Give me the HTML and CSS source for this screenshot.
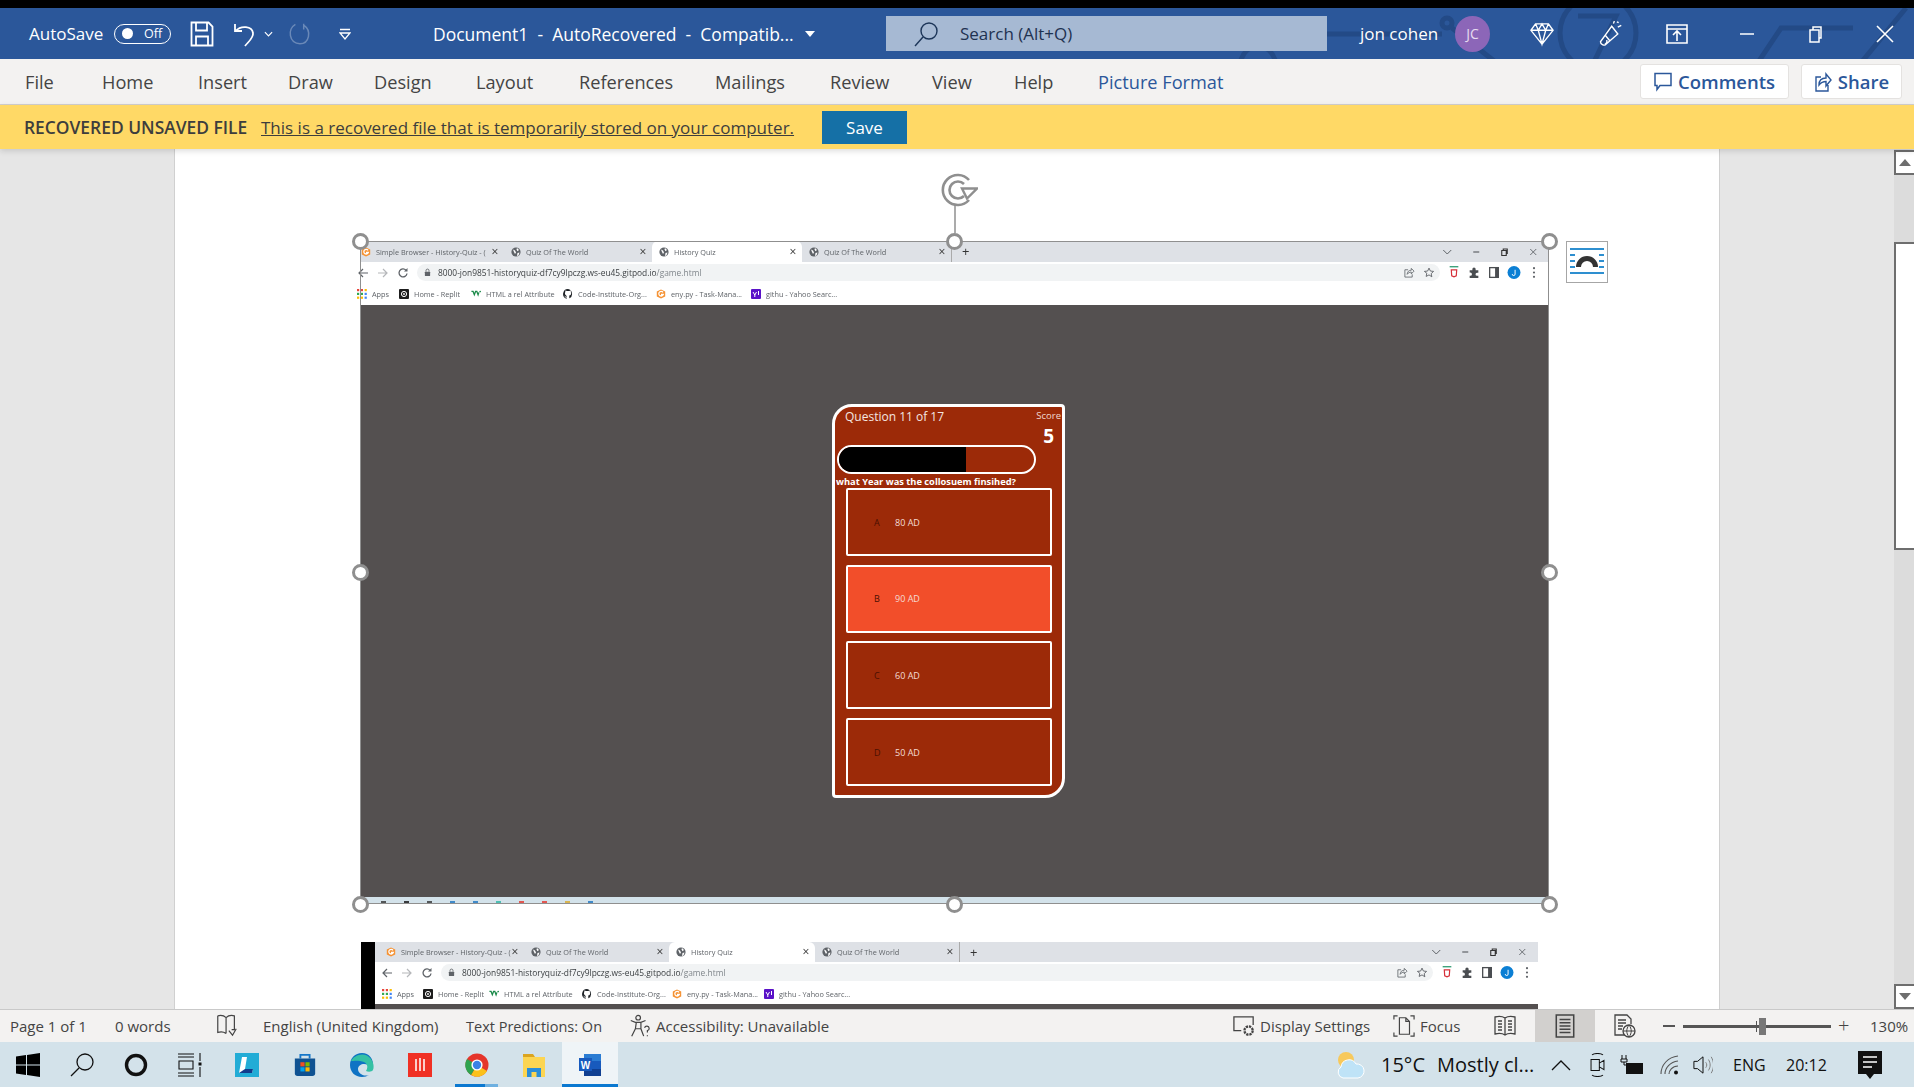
FILE: index.html
```html
<!DOCTYPE html>
<html lang="en">
<head>
<meta charset="utf-8">
<title>Document1 - Word</title>
<link rel="stylesheet" href="styles.css">
</head>
<body>
<svg class="sprite" aria-hidden="true">
  <symbol id="globe" viewBox="0 0 10 10"><circle cx="5" cy="5" r="4.6" fill="#5f6368"/><path d="M2 2.5l2 1 1 2-1 1.5-1-2zM6 1l2 2-1.5 1.2L5.500 2.500zM6.500 6l2-.5-1 3-1.500.5z" fill="#fff"/></symbol>
  <symbol id="gicon" viewBox="0 0 10 10"><path d="M5 .4l4.200 2.200v4.800L5 9.600.8 7.400V2.600z" fill="#f59233"/><path d="M7 3.300A2.300 2.300 0 1 0 7.300 5.500H5" fill="none" stroke="#fff" stroke-width="1.300"/></symbol>
  <symbol id="back" viewBox="0 0 12 12"><path d="M11 6H2M6 2L2 6l4 4" fill="none" stroke="currentColor" stroke-width="1.200"/></symbol>
  <symbol id="fwd" viewBox="0 0 12 12"><path d="M1 6h9M6 2l4 4-4 4" fill="none" stroke="currentColor" stroke-width="1.200"/></symbol>
  <symbol id="reload" viewBox="0 0 12 12"><path d="M10 6.500A4 4 0 1 1 9 3.200" fill="none" stroke="#5f6368" stroke-width="1.300"/><path d="M10.500 1v3.500H7z" fill="#5f6368"/></symbol>
  <symbol id="lock" viewBox="0 0 8 10"><rect x="1" y="4" width="6" height="5" rx=".6" fill="#5f6368"/><path d="M2.300 4V2.800a1.700 1.700 0 0 1 3.400 0V4" fill="none" stroke="#5f6368"/></symbol>
  <symbol id="share" viewBox="0 0 12 12"><path d="M5 3H1.500v8h8V8M4 8c0-3 2-4.500 4.500-4.500V1.500l3 3-3 3V5.500C6.500 5.500 5 6.500 4 8z" fill="none" stroke="#5f6368" stroke-width=".9"/></symbol>
  <symbol id="star" viewBox="0 0 12 12"><path d="M6 1.200l1.500 3.200 3.500.4-2.600 2.400.7 3.500L6 8.600l-3.100 1.700.7-3.500L1 4.800l3.500-.4z" fill="none" stroke="#5f6368" stroke-width="1"/></symbol>
  <symbol id="ext" viewBox="0 0 10 12"><rect x="1" y="0" width="8" height="1.300" fill="#3fa27c"/><path d="M2.500 3.500h5l-.4 5.500-2.100 1-2.100-1z" fill="none" stroke="#d6303a" stroke-width="1.100"/></symbol>
  <symbol id="puzzle" viewBox="0 0 12 12"><path d="M2 4h2.500V2.800a1.500 1.500 0 0 1 3 0V4H10v2.300H8.800a1.400 1.400 0 0 0 0 2.800H10V11H2V9h.6a1.500 1.500 0 0 0 0-3H2z" fill="#4a4d51"/></symbol>
  <symbol id="panel" viewBox="0 0 10 12"><rect x="1" y="1.500" width="8" height="9" fill="#fff" stroke="#4a4d51" stroke-width="1.200"/><rect x="6" y="1.500" width="3" height="9" fill="#4a4d51"/></symbol>
  <symbol id="avatarj" viewBox="0 0 12 12"><circle cx="6" cy="6" r="6" fill="#0b7fd4"/><path d="M7 3.500v4a1.300 1.300 0 0 1-2.600 0" fill="none" stroke="#fff" stroke-width=".9"/></symbol>
  <symbol id="kebab" viewBox="0 0 4 12"><circle cx="2" cy="2" r="1" fill="#5f6368"/><circle cx="2" cy="6" r="1" fill="#5f6368"/><circle cx="2" cy="10" r="1" fill="#5f6368"/></symbol>
  <symbol id="appgrid" viewBox="0 0 10 10"><g fill="#e8453c"><rect width="2.200" height="2.200"/><rect x="3.800" width="2.200" height="2.200"/></g><rect x="7.600" width="2.200" height="2.200" fill="#fbbc05"/><g fill="#34a853"><rect y="3.800" width="2.200" height="2.200"/><rect x="3.800" y="3.800" width="2.200" height="2.200"/></g><rect x="7.600" y="3.800" width="2.200" height="2.200" fill="#4285f4"/><g fill="#fbbc05"><rect y="7.600" width="2.200" height="2.200"/><rect x="3.800" y="7.600" width="2.200" height="2.200"/></g><rect x="7.600" y="7.600" width="2.200" height="2.200" fill="#4285f4"/></symbol>
  <symbol id="replit" viewBox="0 0 10 10"><rect width="10" height="10" rx="1" fill="#1d1d1d"/><circle cx="5" cy="5" r="2.600" fill="none" stroke="#fff" stroke-width="1"/><circle cx="5" cy="5" r=".9" fill="#fff"/></symbol>
  <symbol id="w3" viewBox="0 0 12 10"><path d="M.5 2h2l1.500 4 1.500-4h1.500l1.500 4 1-3" fill="none" stroke="#1c8b4a" stroke-width="1.500"/><circle cx="11" cy="2" r="1" fill="#1c8b4a"/></symbol>
  <symbol id="github" viewBox="0 0 10 10"><path d="M5 0a5 5 0 0 0-1.600 9.700c.3 0 .3-.1.300-.3V8.500C2.300 8.800 2 7.800 2 7.800c-.2-.5-.5-.7-.5-.7-.4-.3 0-.3 0-.3.500 0 .8.500.8.500.4.700 1.100.5 1.400.4 0-.3.200-.5.300-.6C3 6.400 1.900 6 1.900 4.200c0-.5.200-1 .5-1.300 0-.1-.2-.6 0-1.300 0 0 .4-.1 1.400.5a5 5 0 0 1 2.500 0c1-.6 1.400-.5 1.400-.5.300.7.100 1.200 0 1.300.3.300.5.800.5 1.300 0 1.800-1.100 2.200-2.200 2.300.2.200.3.500.3 1v1.400c0 .2.100.3.300.3A5 5 0 0 0 5 0z" fill="#1b1f23"/></symbol>
  <symbol id="yicon" viewBox="0 0 10 10"><rect width="10" height="10" rx="1" fill="#5a12c8"/><path d="M2 3l1.800 3L5.500 3M3.800 6v2M7.500 2v4" stroke="#fff" stroke-width="1" fill="none"/></symbol>
</svg>

<header class="titlebar">
  <svg class="watermark" viewBox="0 0 1914 51" preserveAspectRatio="none" aria-hidden="true">
    <g fill="none" stroke="#234a86" stroke-width="5">
      <circle cx="1598" cy="25" r="38"/>
      <path d="M1578 8h38l-22 46M1327 26h115M1452 20l46 36M1240 56c4-24 32-24 36 0M1757 56l24-36h72M1860 56l46-56"/>
      <circle cx="1447" cy="15" r="5"/>
    </g>
  </svg>
  <div class="tb-left">
    <span class="tb-auto">AutoSave</span>
    <span class="toggle"><i class="toggle-dot"></i><b class="toggle-txt">Off</b></span>
    <svg class="ic-tb" viewBox="0 0 24 26"><path d="M1.500 1.500h17l4 4v19h-21zM6 1.500v8h11v-8M6 24.500v-9h12v9" fill="none" stroke="#fff" stroke-width="1.800"/></svg>
    <svg class="ic-tb" viewBox="0 0 24 26"><path d="M2 3v7h7M2.500 10C8 4 19 5 20 12c.7 5-5 9-8 13" fill="none" stroke="#fff" stroke-width="1.800"/></svg>
    <svg class="ic-tiny" viewBox="0 0 10 6"><path d="M1 1l4 4 4-4" fill="none" stroke="#fff" stroke-width="1.300"/></svg>
    <svg class="ic-tb" viewBox="0 0 26 26"><path d="M8 2.500c-9 5-7 21 5 21 10 0 13-14 4-20M17 2v6" fill="none" stroke="#6a89b8" stroke-width="1.600"/></svg>
    <svg class="ic-qat" viewBox="0 0 12 12"><path d="M1 1.500h10" stroke="#fff" stroke-width="1.500"/><path d="M1 5h10l-5 6z" fill="none" stroke="#fff" stroke-width="1.300"/></svg>
    <span class="tb-doc">Document1  -  AutoRecovered  -  Compatib...</span>
    <span class="tb-caret"></span>
  </div>
  <div class="searchbox">
    <svg class="ic-search" viewBox="0 0 26 26"><circle cx="16" cy="10" r="8" fill="none" stroke="#1c3558" stroke-width="1.400"/><path d="M10 16L2 25" stroke="#1c3558" stroke-width="1.400"/></svg>
    <span>Search (Alt+Q)</span>
  </div>
  <div class="tb-right">
    <span class="tb-user">jon cohen</span>
    <span class="tb-avatar">JC</span>
    <svg class="ic-win" viewBox="0 0 26 26"><path d="M6 2h14l5 7-12 15L1 9zM1 9h24M9 9l4 15 4-15M6 2l3 7 4-7 4 7 3-7" fill="none" stroke="#fff" stroke-width="1.500"/></svg>
    <svg class="ic-win" viewBox="0 0 26 30"><path d="M15 6l7 9L8 27c-2 2-6 0-6-3zM8 17l5 6M7 27c2-1 3-3 2-5M17 3l1-3M22 7l4-2M21 1l2 1" fill="none" stroke="#fff" stroke-width="1.600"/></svg>
    <svg class="ic-win" viewBox="0 0 24 24"><path d="M2 3h20v18H2zM2 7h20" fill="none" stroke="#fff" stroke-width="1.600"/><path d="M12 19v-9M8 13l4-4 4 4" fill="none" stroke="#fff" stroke-width="1.600"/></svg>
    <svg class="ic-win" viewBox="0 0 24 24"><path d="M5 12h14" stroke="#fff" stroke-width="1.500"/></svg>
    <svg class="ic-win" viewBox="0 0 24 24"><path d="M7 8h9v12H7zM10 8V5h8v11h-2" fill="none" stroke="#fff" stroke-width="1.500"/></svg>
    <svg class="ic-win" viewBox="0 0 24 24"><path d="M4 4l16 16M20 4L4 20" stroke="#fff" stroke-width="1.600"/></svg>
  </div>
</header>

<nav class="ribbon">
  <div class="rb-tabs">
    <span>File</span><span>Home</span><span>Insert</span><span>Draw</span><span>Design</span><span>Layout</span><span>References</span><span>Mailings</span><span>Review</span><span>View</span><span>Help</span><span class="rb-active">Picture Format</span>
  </div>
  <div class="rb-actions">
    <span class="rb-btn rb-comments"><svg class="ic-rb" viewBox="0 0 18 20"><path d="M1 1.500h16v12H6l-3 4v-4H1z" fill="none" stroke="#2b579a" stroke-width="1.500"/></svg>Comments</span>
    <span class="rb-btn rb-share"><svg class="ic-rb" viewBox="0 0 18 20"><path d="M7 5H2v14h12v-6M5 13c0-5 3-7 7-7V2l5 6-5 6V9.500C9 9.500 7 10.500 5 13z" fill="none" stroke="#2b579a" stroke-width="1.400"/></svg>Share</span>
  </div>
</nav>

<section class="infobar">
  <strong class="ib-title">RECOVERED UNSAVED FILE</strong>
  <span class="ib-link">This is a recovered file that is temporarily stored on your computer.</span>
  <span class="ib-save">Save</span>
</section>

<main class="doc">
  <div class="gutter"></div>
  <div class="page">
    <figure class="shot shot-one">
      <div class="c-tabs">
        <div class="tab tab-first"><svg class="fav"><use href="#gicon"/></svg><span class="tab-t">Simple Browser - History-Quiz - (</span><span class="tab-x">×</span></div>
        <div class="tab tab-w148"><svg class="fav"><use href="#globe"/></svg><span class="tab-t">Quiz Of The World</span><span class="tab-x">×</span></div>
        <div class="tab tab-on tab-w150"><svg class="fav"><use href="#globe"/></svg><span class="tab-t">History Quiz</span><span class="tab-x">×</span></div>
        <div class="tab tab-w150 tab-last"><svg class="fav"><use href="#globe"/></svg><span class="tab-t">Quiz Of The World</span><span class="tab-x">×</span></div>
        <span class="tab-plus">+</span>
        <div class="c-win"><svg viewBox="0 0 10 10"><path d="M1 3l4 4 4-4" fill="none" stroke="#5f6368"/></svg><svg viewBox="0 0 10 10"><path d="M2 5h6" stroke="#5f6368" stroke-width="1.200"/></svg><svg viewBox="0 0 10 10"><path d="M2.500 3.500h4.500v5H2.500zM4 3.500V2h4v5" fill="none" stroke="#333" stroke-width="1.100"/></svg><svg viewBox="0 0 10 10"><path d="M2 2l6 6M8 2L2 8" stroke="#5f6368" stroke-width=".9"/></svg></div>
      </div>
      <div class="c-tool">
        <svg class="nav nav-cut"><use href="#back"/></svg><svg class="nav nav-dim"><use href="#fwd"/></svg><svg class="nav"><use href="#reload"/></svg>
        <div class="addr"><svg class="ad-lock"><use href="#lock"/></svg><span class="ad-url">8000-jon9851-historyquiz-df7cy9lpczg.ws-eu45.gitpod.io<em>/game.html</em></span><svg class="ad-ic"><use href="#share"/></svg><svg class="ad-ic"><use href="#star"/></svg></div>
        <div class="c-ext"><svg><use href="#ext"/></svg><svg><use href="#puzzle"/></svg><svg><use href="#panel"/></svg><svg><use href="#avatarj"/></svg><svg><use href="#kebab"/></svg></div>
      </div>
      <div class="c-bm bm-one">
        <span class="bm"><svg><use href="#appgrid"/></svg>Apps</span>
        <span class="bm"><svg><use href="#replit"/></svg>Home - Replit</span>
        <span class="bm"><svg><use href="#w3"/></svg>HTML a rel Attribute</span>
        <span class="bm"><svg><use href="#github"/></svg>Code-Institute-Org...</span>
        <span class="bm"><svg><use href="#gicon"/></svg>eny.py - Task-Mana...</span>
        <span class="bm"><svg><use href="#yicon"/></svg>githu - Yahoo Searc...</span>
      </div>
      <div class="stage">
        <article class="card">
          <div class="card-head">
            <span class="card-q">Question 11 of 17</span>
            <div class="card-score"><small>Score</small><b>5</b></div>
          </div>
          <div class="progress"><div class="progress-fill"></div></div>
          <h2 class="question">what Year was the collosuem finsihed?</h2>
          <div class="options">
            <div class="option"><span class="opt-l">A</span><span>80 AD</span></div>
            <div class="option option-on"><span class="opt-l">B</span><span>90 AD</span></div>
            <div class="option"><span class="opt-l">C</span><span>60 AD</span></div>
            <div class="option"><span class="opt-l">D</span><span>50 AD</span></div>
          </div>
        </article>
      </div>
      <div class="strip"><i class="s1"></i><i class="s2"></i><i class="s1"></i><i class="s3"></i><i class="s3"></i><i class="s4"></i><i class="s5"></i><i class="s5"></i><i class="s6"></i><i class="s3"></i></div>

      <div class="sel" aria-hidden="true"></div>
      <svg class="rot" viewBox="0 0 38 60" aria-hidden="true"><path d="M29 7A15 15 0 1 0 29 27" fill="none" stroke="#8f8f8f" stroke-width="2.600"/><path d="M24 11A8.500 8.500 0 1 0 24 23" fill="none" stroke="#8f8f8f" stroke-width="2.600"/><path d="M22 15.500H37L27 25.500z" fill="#fff" stroke="#8f8f8f" stroke-width="2.400"/><path d="M15 32v28" stroke="#8f8f8f" stroke-width="1.500"/></svg>
      <i class="h h-tl"></i><i class="h h-tm"></i><i class="h h-tr"></i><i class="h h-ml"></i><i class="h h-mr"></i><i class="h h-bl"></i><i class="h h-bm"></i><i class="h h-br"></i>
      <div class="layout-btn"><svg viewBox="0 0 34 34"><path d="M0 4h34M0 28h34M0 10h5M29 10h5M0 16h5M29 16h5M0 22h5M29 22h5" stroke="#2e8fd0" stroke-width="1.800"/><path d="M6 22a11 11 0 0 1 22 0h-5a6 6 0 0 0-12 0z" fill="#333"/></svg></div>
    </figure>

    <figure class="shot shot-two">
      <div class="shot-black"></div>
      <div class="shot-main">
        <div class="c-tabs c-tabs2">
          <div class="tab tab-w149 tab-g"><svg class="fav"><use href="#gicon"/></svg><span class="tab-t">Simple Browser - History-Quiz - (</span><span class="tab-x">×</span></div>
          <div class="tab tab-w145"><svg class="fav"><use href="#globe"/></svg><span class="tab-t">Quiz Of The World</span><span class="tab-x">×</span></div>
          <div class="tab tab-on tab-w146"><svg class="fav"><use href="#globe"/></svg><span class="tab-t">History Quiz</span><span class="tab-x">×</span></div>
          <div class="tab tab-w145 tab-last"><svg class="fav"><use href="#globe"/></svg><span class="tab-t">Quiz Of The World</span><span class="tab-x">×</span></div>
          <span class="tab-plus">+</span>
          <div class="c-win"><svg viewBox="0 0 10 10"><path d="M1 3l4 4 4-4" fill="none" stroke="#5f6368"/></svg><svg viewBox="0 0 10 10"><path d="M2 5h6" stroke="#5f6368" stroke-width="1.200"/></svg><svg viewBox="0 0 10 10"><path d="M2.500 3.500h4.500v5H2.500zM4 3.500V2h4v5" fill="none" stroke="#333" stroke-width="1.100"/></svg><svg viewBox="0 0 10 10"><path d="M2 2l6 6M8 2L2 8" stroke="#5f6368" stroke-width=".9"/></svg></div>
        </div>
        <div class="c-tool c-tool2">
          <svg class="nav"><use href="#back"/></svg><svg class="nav nav-dim"><use href="#fwd"/></svg><svg class="nav"><use href="#reload"/></svg>
          <div class="addr"><svg class="ad-lock"><use href="#lock"/></svg><span class="ad-url">8000-jon9851-historyquiz-df7cy9lpczg.ws-eu45.gitpod.io<em>/game.html</em></span><svg class="ad-ic"><use href="#share"/></svg><svg class="ad-ic"><use href="#star"/></svg></div>
          <div class="c-ext"><svg><use href="#ext"/></svg><svg><use href="#puzzle"/></svg><svg><use href="#panel"/></svg><svg><use href="#avatarj"/></svg><svg><use href="#kebab"/></svg></div>
        </div>
        <div class="c-bm bm-two">
          <span class="bm"><svg><use href="#appgrid"/></svg>Apps</span>
          <span class="bm"><svg><use href="#replit"/></svg>Home - Replit</span>
          <span class="bm"><svg><use href="#w3"/></svg>HTML a rel Attribute</span>
          <span class="bm"><svg><use href="#github"/></svg>Code-Institute-Org...</span>
          <span class="bm"><svg><use href="#gicon"/></svg>eny.py - Task-Mana...</span>
          <span class="bm"><svg><use href="#yicon"/></svg>githu - Yahoo Searc...</span>
        </div>
        <div class="stage stage2"></div>
      </div>
    </figure>
  </div>
  <div class="gutter"></div>
  <div class="vscroll">
    <span class="vs-btn vs-up"><i class="tri-up"></i></span>
    <span class="vs-track"></span>
    <span class="vs-thumb"></span>
    <span class="vs-btn vs-down"><i class="tri-down"></i></span>
  </div>
</main>

<footer class="status">
  <span>Page 1 of 1</span>
  <span>0 words</span>
  <svg class="ic-st" viewBox="0 0 22 26"><path d="M1 2c4-1 7 0 9 2 2-2 5-3 9-2v15h-3M1 2v18c3-1 6-1 9 1M10 4v17M13 18l4 5 4-7" fill="none" stroke="#444" stroke-width="1.300"/></svg>
  <span>English (United Kingdom)</span>
  <span class="st-tp">Text Predictions: On</span>
  <svg class="ic-st" viewBox="0 0 22 26"><circle cx="9" cy="4" r="2.500" fill="none" stroke="#444" stroke-width="1.300"/><path d="M1 7l5 2h6l5-2M7 9l-1 7-4 8M12 9v7l3 8M6 16h6" fill="none" stroke="#444" stroke-width="1.300"/><path d="M16 15a2.500 2.500 0 1 1 3 3v2M19 23v1" fill="none" stroke="#444" stroke-width="1.300"/></svg>
  <span>Accessibility: Unavailable</span>
  <svg class="ic-st" viewBox="0 0 24 24"><path d="M9 17H1V2h21v9" fill="none" stroke="#444" stroke-width="1.400"/><circle cx="17" cy="17" r="4.500" fill="none" stroke="#444" stroke-width="2.500" stroke-dasharray="2.500 1"/></svg>
  <span>Display Settings</span>
  <svg class="ic-st" viewBox="0 0 24 24"><path d="M1 5V1h4M19 1h4v4M23 19v4h-4M5 23H1v-4M7 3h7l4 4v14H7zM14 3v4h4" fill="none" stroke="#444" stroke-width="1.300"/></svg>
  <span>Focus</span>
  <svg class="ic-st" viewBox="0 0 22 22"><path d="M1 2c4-1 7-1 10 1 3-2 6-2 10-1v17c-4-1-7-1-10 1-3-2-6-2-10-1zM11 3v17M4 6h4M4 9h4M4 12h4M4 15h4M14 6h4M14 9h4M14 12h4M14 15h4" fill="none" stroke="#444" stroke-width="1.300"/></svg>
  <span class="st-print"><svg class="ic-st" viewBox="0 0 18 22"><path d="M1 1h16v20H1zM4 5h10M4 8h10M4 11h10M4 14h10M4 17h10" fill="none" stroke="#444" stroke-width="1.400"/></svg></span>
  <svg class="ic-st st-web" viewBox="0 0 22 24"><path d="M14 21H1V1h12l4 4v5M4 6h8M4 9h8M4 12h5M4 15h4" fill="none" stroke="#444" stroke-width="1.300"/><circle cx="15" cy="17" r="6" fill="#f3f2f1" stroke="#444" stroke-width="1.300"/><path d="M9 17h12M15 11c-3 4-3 8 0 12M15 11c3 4 3 8 0 12" fill="none" stroke="#444"/></svg>
  <span class="st-minus"></span>
  <span class="slider"><i class="slider-tick"></i><i class="slider-thumb"></i></span>
  <span class="st-plus">+</span>
  <span>130%</span>
</footer>

<footer class="taskbar">
  <span class="ti"><svg class="ic-task" viewBox="0 0 24 24"><path d="M0 3.500l10-1.400v9.300H0zM11 2l13-2v11.400H11zM0 12.500h10v9.400L0 20.500zM11 12.500h13V24l-13-2z"/></svg></span>
  <span class="ti"><svg class="ic-task" viewBox="0 0 24 24"><circle cx="15" cy="9" r="8" fill="none" stroke="#111" stroke-width="1.300"/><path d="M9 15L1 23" stroke="#111" stroke-width="1.300"/></svg></span>
  <span class="ti"><svg class="ic-task" viewBox="0 0 24 24"><circle cx="12" cy="12" r="9.500" fill="none" stroke="#111" stroke-width="3.400"/></svg></span>
  <span class="ti"><svg class="ic-task" viewBox="0 0 24 24"><path d="M0 1h16M0 4h16M1 8h14v8H1zM0 20h16M0 23h16" fill="none" stroke="#111" stroke-width="1.100"/><path d="M22 0v8M22 14v10" stroke="#111" stroke-width="1.100"/><rect x="20.500" y="9.500" width="3" height="3" fill="#111"/></svg></span>
  <span class="ti"><svg class="ic-task" viewBox="0 0 24 24"><rect width="24" height="24" fill="#22acd6"/><path d="M7 4h5l-2 12h8l-1 4H4z" fill="#fff"/><path d="M4 20h13l1-4h-8z" fill="#123c8c"/></svg></span>
  <span class="ti"><svg class="ic-task" viewBox="0 0 24 26"><path d="M7 6V2h10v4" fill="none" stroke="#1677c9" stroke-width="2"/><path d="M1 6h22v16a3 3 0 0 1-3 3H4a3 3 0 0 1-3-3z" fill="#0f5292"/><rect x="7" y="10" width="4.500" height="4.500" fill="#f25022"/><rect x="12.500" y="10" width="4.500" height="4.500" fill="#7fba00"/><rect x="7" y="15.500" width="4.500" height="4.500" fill="#00a4ef"/><rect x="12.500" y="15.500" width="4.500" height="4.500" fill="#ffb900"/></svg></span>
  <span class="ti"><svg class="ic-task" viewBox="0 0 24 24"><path d="M12 0C5 0 0 5 0 12c0 7 5 12 12 12 3 0 5-1 7-2-6 2-11-2-11-6 0-3 3-5 6-5 3 0 5 1 5 3h4c1-8-4-14-11-14z" fill="#0f73c4"/><path d="M1 8C4 2 15-2 21 6c3 4 3 9 2 11-1 2-5 2-7 1 2-3 2-7-2-9C9 7 3 8 1 8z" fill="#35c1a4"/></svg></span>
  <span class="ti"><svg class="ic-task" viewBox="0 0 24 24"><rect width="24" height="24" fill="#f03024"/><path d="M8 6v12M12 5v13M16 6v12" stroke="#fff" stroke-width="1.500"/></svg></span>
  <span class="ti"><svg class="ic-task" viewBox="0 0 24 24"><circle cx="12" cy="12" r="11.500" fill="#e5352b"/><path d="M12 12L22 18A11.500 11.500 0 0 1 6 22z" fill="#fbc11b"/><path d="M12 12L6 22A11.500 11.500 0 0 1 2 6z" fill="#2ea44f"/><circle cx="12" cy="12" r="5.600" fill="#fff"/><circle cx="12" cy="12" r="4.200" fill="#3b82e6"/></svg></span>
  <span class="ti"><svg class="ic-task" viewBox="0 0 24 24"><path d="M1 1h10l2 3H1z" fill="#dba521"/><rect x="1" y="4" width="22" height="20" fill="#fcd552"/><rect x="5" y="15" width="14" height="9" fill="#2b8ed8"/><rect x="9.500" y="19" width="5" height="5" fill="#fcd552"/></svg></span>
  <span class="ti ti-word"><svg class="ic-task" viewBox="0 0 24 24"><rect x="6" y="1" width="17" height="22" fill="#2b7cd3"/><rect x="6" y="8" width="17" height="8" fill="#185abd"/><rect x="6" y="16" width="17" height="7" fill="#103f91"/><rect x="1" y="5" width="13" height="13" fill="#185abd"/><text x="7.500" y="15.500" class="word-w">W</text></svg></span>
  <span></span>
  <svg class="ic-sys ic-weather" viewBox="0 0 30 30"><circle cx="11" cy="10" r="8" fill="#f7c95c"/><path d="M8 28a6 6 0 0 1-2-11 8 8 0 0 1 15-3 7 7 0 0 1 2 14z" fill="#bfe3f7" stroke="#fff"/></svg>
  <span class="tx-lg">15°C</span>
  <span class="tx-lg">Mostly cl...</span>
  <svg class="ic-sys" viewBox="0 0 20 12"><path d="M1 11l9-9 9 9" fill="none" stroke="#111" stroke-width="1.300"/></svg>
  <svg class="ic-sys ic-cam" viewBox="0 0 16 26"><path d="M2 2c3-2 9-2 12 0M2 24c3 2 9 2 12 0M1 7h9v12H1zM10 11l5-3v10l-5-3" fill="none" stroke="#111" stroke-width="1.100"/></svg>
  <svg class="ic-sys ic-bat" viewBox="0 0 24 20"><path d="M2 0v4M6 0v4M1 4h6v3H1zM4 7v3h2" fill="none" stroke="#111"/><rect x="6" y="8" width="17" height="11" fill="#111"/></svg>
  <svg class="ic-sys" viewBox="0 0 20 20"><path d="M1 19C1 10 8 2 18 1M5 19c0-6 5-12 13-13M9 19c0-3 3-8 9-8" fill="none" stroke="#555" stroke-width="1.100"/><circle cx="16" cy="17.500" r="2" fill="#111"/></svg>
  <svg class="ic-sys" viewBox="0 0 22 22"><path d="M1 7h4l6-5v18l-6-5H1z" fill="none" stroke="#111" stroke-width="1.100"/><path d="M14 8c1.500 2 1.500 4 0 6M17 5c2.500 4 2.500 8 0 12M20 2c3.500 6 3.500 12 0 18" fill="none" stroke="#777"/></svg>
  <span class="tx-md">ENG</span>
  <span class="tx-md">20:12</span>
  <svg class="ic-sys ic-note" viewBox="0 0 24 28"><path d="M0 0h24v23h-8l-4 5-4-5H0z" fill="#111"/><path d="M5 6h14M5 11h14M5 16h9" stroke="#fff" stroke-width="1.300"/></svg>
  <i class="run-chrome"></i>
  <i class="run-word"></i>
</footer>
</body>
</html>
```

FILE: styles.css
```css
* { box-sizing: border-box; }
html, body { margin: 0; padding: 0; }
body {
  width: 1914px;
  height: 1087px;
  overflow: hidden;
  display: flex;
  flex-direction: column;
  border-top: 8px solid #000;
  background: #fff;
  font-family: "Open Sans", "Noto Sans", "Liberation Sans", sans-serif;
  color: #444;
}
.sprite { position: absolute; width: 0; height: 0; }

/* Title bar */
.titlebar {
  position: relative;
  height: 51px;
  flex: none;
  display: grid;
  grid-template-columns: 886px 441px 587px;
  align-items: stretch;
  background: #2b579a;
  color: #fff;
  font-size: 17px;
  overflow: hidden;
}
.watermark { position: absolute; inset: 0; width: 100%; height: 100%; }
.tb-left {
  position: relative;
  display: grid;
  grid-template-columns: 85px 76px 43px 31px 24px 49px 96px 372px auto;
  align-items: center;
  padding-left: 29px;
}
.tb-auto { white-space: nowrap; }
.toggle {
  width: 57px;
  height: 20px;
  border: 1.500px solid #fff;
  border-radius: 10px;
  display: flex;
  align-items: center;
  padding-left: 7px;
  gap: 11px;
}
.toggle-dot { width: 11px; height: 11px; border-radius: 50%; background: #fff; flex: none; }
.toggle-txt { font-weight: 400; font-size: 12.500px; }
.ic-tb { width: 24px; height: 26px; }
.ic-tiny { width: 9px; height: 6px; margin-left: 0; }
.ic-qat { width: 12px; height: 12px; margin-left: 2px; }
.tb-doc { white-space: pre; font-size: 17.500px; }
.tb-caret { width: 0; height: 0; border: 5px solid transparent; border-top: 6px solid #fff; border-bottom: 0; }
.searchbox {
  position: relative;
  margin: 8px 0;
  height: 35px;
  background: #a6b9d3;
  color: #1f3251;
  display: flex;
  align-items: center;
  padding-left: 26px;
  gap: 20px;
  font-size: 17px;
}
.ic-search { width: 28px; height: 26px; }
.tb-right {
  position: relative;
  display: grid;
  grid-template-columns: 95px 35px 104px 32px 102px 38px 98px 42px;
  align-items: center;
  justify-items: center;
  padding-left: 33px;
}
.tb-user { justify-self: start; white-space: nowrap; font-size: 17px; }
.tb-avatar {
  width: 35px;
  height: 36px;
  border-radius: 50%;
  background: #8c66b8;
  color: #e6dcf0;
  font-size: 14px;
  display: flex;
  align-items: center;
  justify-content: center;
}
.ic-win { width: 24px; height: 26px; }

/* Ribbon */
.ribbon {
  height: 46px;
  flex: none;
  background: #f3f2f1;
  border-bottom: 1px solid #d2d0ce;
  display: flex;
  justify-content: space-between;
  align-items: stretch;
  font-size: 18.200px;
}
.rb-tabs {
  display: grid;
  grid-template-columns: 77px 96px 90px 86px 102px 103px 136px 115px 102px 82px 84px auto;
  align-items: center;
  padding-left: 25px;
}
.rb-active { color: #2b579a; }
.rb-actions { display: flex; gap: 12px; padding: 5px 12px 5px 0; }
.rb-btn {
  display: flex;
  align-items: center;
  justify-content: center;
  gap: 6px;
  background: #fff;
  border: 1px solid #e4e2e0;
  border-radius: 3px;
  color: #2b579a;
  font-size: 18.500px;
  font-weight: 600;
}
.rb-comments { width: 149px; }
.rb-share { width: 101px; }
.ic-rb { width: 18px; height: 20px; }

/* Info bar */
.infobar {
  position: relative;
  z-index: 2;
  height: 44px;
  flex: none;
  display: flex;
  align-items: center;
  background: #ffd966;
  padding-left: 24px;
  font-size: 17px;
  color: #3d3d3d;
  box-shadow: 0 2px 6px rgba(0, 0, 0, .14);
}
.ib-title { font-weight: 600; width: 237px; white-space: nowrap; font-size: 17.400px; }
.ib-link { text-decoration: underline; width: 561px; white-space: nowrap; }
.ib-save {
  width: 85px;
  height: 33px;
  background: #1570a6;
  color: #fff;
  display: flex;
  align-items: center;
  justify-content: center;
  font-size: 17px;
}

/* Document */
.doc {
  height: 860px;
  flex: none;
  display: grid;
  grid-template-columns: 175px 1544px 175px 20px;
  background: #e6e6e6;
  overflow: hidden;
}
.gutter { background: #e6e6e6; border-left: 1px solid #d0d0d0; }
.gutter:first-child { border-left: 0; border-right: 1px solid #d0d0d0; }
.page {
  background: #fff;
  padding: 92px 0 0 185px;
  overflow: hidden;
}
.shot { margin: 0; position: relative; font-size: 7.300px; color: #5f6368; }
.shot-one { width: 1189px; height: 663px; display: flex; flex-direction: column; }
.shot-two {
  width: 1177px;
  height: 200px;
  margin: 38px 0 0 1px;
  display: flex;
}
.shot-black { width: 14px; background: #000; flex: none; }
.shot-main { flex: 1; display: flex; flex-direction: column; overflow: hidden; min-width: 0; }

.c-tabs, .c-tool, .c-bm { filter: blur(.3px); }
.c-tabs { height: 21px; flex: none; background: #dee1e6; display: flex; align-items: stretch; }
.c-tabs2 { height: 20px; }
.tab {
  display: flex;
  align-items: center;
  gap: 5px;
  padding: 0 5px 0 7px;
  white-space: nowrap;
  overflow: hidden;
  flex: none;
}
.tab-first { width: 144px; padding-left: 1px; }
.tab-g { padding-left: 11px; }
.tab-w148 { width: 148px; }
.tab-w150 { width: 150px; }
.tab-w149 { width: 149px; }
.tab-w145 { width: 145px; }
.tab-w146 { width: 146px; }
.tab-on { background: #fff; border-radius: 6px 6px 0 0; }
.tab-last { border-right: 1px solid #aaa; background-clip: padding-box; }
.fav { width: 10px; height: 10px; flex: none; }
.tab-t { flex: 1; min-width: 0; }
.tab-x { width: 8px; flex: none; font-size: 12px; color: #333; text-align: center; line-height: 1; }
.tab-plus { margin-left: 10px; font-size: 13px; color: #333; align-self: center; line-height: 1; }
.c-win { margin-left: auto; display: flex; align-items: center; padding-right: 2px; }
.c-win svg { width: 28.500px; height: 10px; }

.c-tool { height: 21px; flex: none; background: #fff; display: flex; align-items: center; }
.nav { width: 20px; height: 12px; color: #5f6368; flex: none; }
.nav-cut { margin-left: -7px; }
.nav-dim { color: #b5b7ba; }
.c-tool2 { padding-left: 2px; }
.addr {
  flex: 1;
  height: 17px;
  margin: 0 4px;
  background: #f1f3f4;
  border-radius: 9px;
  display: flex;
  align-items: center;
  padding: 0 1px 0 7px;
  min-width: 0;
}
.ad-lock { width: 7px; height: 9px; flex: none; margin-right: 7px; }
.ad-url { flex: 1; color: #3c4043; font-size: 8.400px; white-space: nowrap; }
.ad-url em { font-style: normal; color: #80868b; }
.ad-ic { width: 20px; height: 11px; flex: none; }
.c-ext { display: flex; align-items: center; flex: none; padding-right: 5px; }
.c-tool2 .c-ext { padding-right: 1px; }
.c-ext svg { width: 20px; height: 13px; }

.c-bm { height: 22px; flex: none; background: #fff; display: grid; align-items: center; }
.shot-two .c-bm { height: 21px; }
.bm-one { grid-template-columns: 42px 72px 92px 93px 95px auto; margin-left: -3px; }
.bm-two { grid-template-columns: 41px 66px 93px 90px 92px auto; padding-left: 7px; }
.bm { display: flex; align-items: center; gap: 5px; white-space: nowrap; }
.bm svg { width: 10px; height: 10px; flex: none; }

.stage { flex: 1; background: #545050; padding: 99px 0 0 472px; }
.stage2 { padding: 0; }
.card {
  width: 233px;
  height: 394px;
  background: #9c2a08;
  border: 3px solid #fff;
  border-radius: 20px 4px 20px 4px;
  color: #fff;
}
.card-head { height: 38px; display: flex; justify-content: space-between; padding-right: 1px; }
.card-q { font-size: 12px; padding: 1px 0 0 10px; color: #f4e6e0; }
.card-score { display: flex; flex-direction: column; align-items: flex-end; color: #f0d8d0; padding-top: 3px; }
.card-score small { font-size: 9.500px; line-height: 11px; }
.card-score b { font-size: 19px; line-height: 24px; margin: 3px 7px 0 0; color: #fff; }
.progress {
  width: 199px;
  height: 29px;
  margin-left: 2px;
  border: 2px solid #fff;
  border-radius: 15px;
  overflow: hidden;
}
.progress-fill { width: 127px; height: 100%; background: #000; }
.question { margin: 0 0 0 1px; height: 14px; font-size: 9.300px; line-height: 16px; font-weight: 700; white-space: nowrap; }
.options { margin-left: 11px; width: 206px; display: flex; flex-direction: column; gap: 8.700px; }
.option {
  height: 68px;
  border: 2px solid #fff;
  border-radius: 2px;
  display: flex;
  align-items: center;
  padding-left: 26px;
  font-size: 9px;
  color: #f4dcd4;
}
.option-on { background: #f24e2a; }
.opt-l { width: 21px; color: #4a0f02; }

.strip {
  position: absolute;
  left: 0;
  right: 0;
  bottom: 0;
  height: 7px;
  background: #d3e2ea;
  display: flex;
  align-items: flex-end;
  gap: 18px;
  padding-left: 21px;
}
.strip i { width: 5px; height: 3px; flex: none; opacity: .8; }
.s1 { background: #333; }
.s2 { background: #111; }
.s3 { background: #1b74c0; }
.s4 { background: #2cb5a4; }
.s5 { background: #e5352b; }
.s6 { background: #d9a92a; }

/* Selection overlay */
.sel { position: absolute; inset: 0; border: 1.500px solid #8f8f8f; pointer-events: none; }
.rot { position: absolute; left: 580px; top: -68px; width: 38px; height: 60px; }
.h {
  position: absolute;
  width: 17px;
  height: 17px;
  margin: -8.500px 0 0 -8.500px;
  border-radius: 50%;
  background: #fff;
  border: 3px solid #8f8f8f;
}
.h-tl { left: 0; top: 0; }
.h-tm { left: 594px; top: 0; }
.h-tr { left: 1189px; top: 0; }
.h-ml { left: 0; top: 331px; }
.h-mr { left: 1189px; top: 331px; }
.h-bl { left: 0; top: 663px; }
.h-bm { left: 594px; top: 663px; }
.h-br { left: 1189px; top: 663px; }
.layout-btn {
  position: absolute;
  left: 1206px;
  top: 0;
  width: 42px;
  height: 42px;
  background: #fff;
  border: 1px solid #a6a6a6;
  padding: 3px;
}
.layout-btn svg { display: block; width: 100%; height: 100%; }

/* Scrollbar */
.vscroll { display: flex; flex-direction: column; background: #dcdcdc; padding-top: 1px; }
.vs-btn {
  height: 25px;
  flex: none;
  background: #fff;
  border: 2px solid #6e6e6e;
  border-right: 0;
  display: flex;
  align-items: center;
  justify-content: center;
}
.vs-track { height: 67px; flex: none; }
.vs-thumb {
  height: 308px;
  flex: none;
  background: #fff;
  border: 2px solid #6e6e6e;
  border-right: 0;
  margin-bottom: auto;
}
.tri-up, .tri-down { width: 0; height: 0; border: 6px solid transparent; }
.tri-up { border-bottom: 7px solid #6e6e6e; border-top: 0; }
.tri-down { border-top: 7px solid #6e6e6e; border-bottom: 0; }

/* Status bar */
.status {
  height: 33px;
  flex: none;
  display: grid;
  grid-template-columns: 105px 101px 47px 203px 163px 27px 577px 27px 133px 27px 74px 41px 60px 68px 20px 148px 39px auto;
  align-items: center;
  padding-left: 10px;
  background: #f3f2f1;
  border-top: 1px solid #c9c9c9;
  font-size: 15px;
  color: #444;
  white-space: nowrap;
}
.st-tp { font-size: 14.500px; }
.ic-st { width: 22px; height: 24px; }
.st-print {
  height: 32px;
  background: #d2d0ce;
  display: flex;
  align-items: center;
  justify-content: center;
}
.st-web { margin-left: 19px; }
.st-minus { width: 12px; height: 1.500px; background: #555; }
.slider { position: relative; height: 3px; background: #555; }
.slider-tick { position: absolute; left: 73px; top: -4px; width: 1px; height: 11px; background: #555; }
.slider-thumb { position: absolute; left: 76px; top: -7px; width: 7px; height: 17px; background: #777; }
.st-plus { padding-left: 7px; font-size: 20px; font-weight: 300; line-height: 1; }

/* Taskbar */
.taskbar {
  position: relative;
  height: 45px;
  flex: none;
  display: grid;
  grid-template-columns: 55px 54px 53px 56px 58px 57px 58px 57px 57px 57px 56px 717px 46px 56px 114px 39px 30px 40px 33px 40px 53px 72px auto;
  align-items: center;
  background: #d3e2ea;
  color: #111;
  white-space: nowrap;
}
.ti { height: 45px; display: flex; align-items: center; justify-content: center; }
.ti-word { background: #eff4f7; }
.ic-task { width: 24px; height: 24px; }
.word-w { font: 700 10px "Liberation Sans", sans-serif; fill: #fff; text-anchor: middle; }
.ic-sys { height: 20px; width: 20px; }
.ic-weather { width: 30px; height: 30px; }
.ic-cam { width: 15px; height: 24px; }
.ic-bat { width: 24px; height: 20px; }
.ic-note { width: 24px; height: 28px; }
.tx-lg { font-size: 20px; }
.tx-md { font-size: 16px; }
.run-chrome, .run-word { position: absolute; bottom: 0; height: 3px; background: #0b78d0; }
.run-chrome { left: 455px; width: 43px; background: linear-gradient(90deg, #0b78d0 70%, #6fb0e0 70%); }
.run-word { left: 562px; width: 56px; }
```
